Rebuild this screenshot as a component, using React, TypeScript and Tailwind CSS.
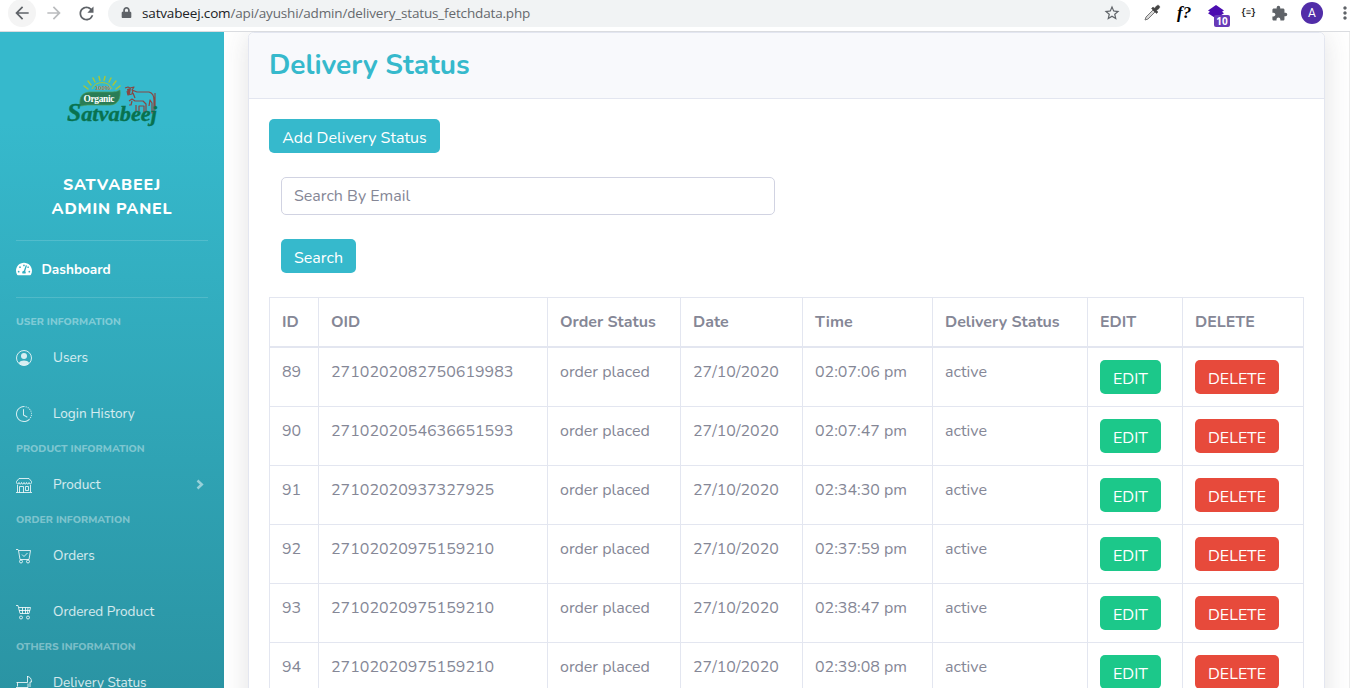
import type { ReactNode } from "react";
import { FaTachometerAlt, FaLock } from "react-icons/fa";
import { BsClockHistory } from "react-icons/bs";
import { MdArrowBack, MdArrowForward, MdRefresh, MdStarBorder, MdExtension, MdMoreVert } from "react-icons/md";

const rows = [
  ["89", "2710202082750619983", "02:07:06 pm"],
  ["90", "2710202054636651593", "02:07:47 pm"],
  ["91", "27102020937327925", "02:34:30 pm"],
  ["92", "27102020975159210", "02:37:59 pm"],
  ["93", "27102020975159210", "02:38:47 pm"],
  ["94", "27102020975159210", "02:39:08 pm"],
];

const columns = "grid grid-cols-[49px_229px_133px_122px_130px_155px_95px_122px]";
const cell = "border-l border-[#e3e6f0] pl-3 pt-3 leading-6 whitespace-nowrap last:border-r";

function BrowserBar() {
  return (
    <div className="flex h-8 shrink-0 items-start border-b border-[#dadce0] bg-white font-['Open_Sans',sans-serif]">
      <div className="flex h-[26px] w-[108px] items-center gap-1 pl-2 text-[#5f6368]">
        <div className="flex size-7 items-center justify-center rounded-full bg-[#f4f4f4]"><MdArrowBack size={20} /></div>
        <div className="flex size-7 items-center justify-center text-[#babcbe]"><MdArrowForward size={20} /></div>
        <div className="flex size-7 items-center justify-center"><MdRefresh size={21} /></div>
      </div>
      <div className="flex h-[27px] w-[1022px] items-center rounded-full bg-[#f1f3f4] pb-[2px] pl-3">
        <FaLock size={11} className="mr-[10px] ml-[1px] shrink-0 text-[#5f6368]" />
        <div className="text-[13.5px] leading-5 tracking-[-0.155px] text-[#66696d]">
          <span className="text-[#202124]">satvabeej.com</span>/api/ayushi/admin/delivery_status_fetchdata.php
        </div>
        <MdStarBorder size={18} className="mr-[9px] ml-auto text-[#5f6368]" />
      </div>
      <div className="flex h-[26px] flex-1 items-center">
        <svg className="ml-[13px] shrink-0" width="18" height="18" viewBox="0 0 18 18">
          <path d="M2 16l1-3 7-7 2 2-7 7z" fill="#d8d8d8" stroke="#777" strokeWidth="1" />
          <path d="M8.500 4.500l5 5 1.500-1.500-1.500-1.500L16 4.500c1-1 .8-2 .2-2.700s-1.800-.8-2.700.2L11.500 4.200 10 3z" fill="#454545" stroke="#454545" strokeWidth=".5" />
        </svg>
        <span className="ml-[16px] w-5 shrink-0 font-['Liberation_Serif',serif] text-[17px] leading-5 font-bold text-black italic">f?</span>
        <div className="relative ml-[10px] h-[22px] w-[22px] shrink-0 pt-[3px]">
          <svg width="18" height="16" viewBox="0 0 18 16">
            <path d="M9 0l8 5.500-2 1.300 2 1.400-8 5.300-8-5.300 2-1.400-2-1.300z" fill="#4b0db0" />
          </svg>
          <span className="absolute top-[13px] left-[7px] flex h-3 w-4 items-center justify-center rounded-[2px] bg-[#673ab7] text-[10px] leading-3 font-bold text-white">10</span>
        </div>
        <span className="ml-[12px] w-[18px] shrink-0 font-['Liberation_Mono',monospace] text-[9px] leading-3 font-bold tracking-[-0.7px] text-[#222]">{"{≡}"}</span>
        <MdExtension size={17} className="ml-[12px] shrink-0 text-[#5f6368]" />
        <span className="ml-[13px] flex size-[22px] shrink-0 items-center justify-center rounded-full bg-[#512da8] font-['Roboto',sans-serif] text-[12px] text-white">A</span>
        <MdMoreVert size={20} className="-mr-3 ml-[12px] shrink-0 text-[#5f6368]" />
      </div>
    </div>
  );
}

function Logo() {
  return (
    <svg width="92" height="54" viewBox="0 0 92 54">
      <g stroke="#a6c63b" strokeWidth="1.500" strokeLinecap="round">
        <path d="M24 10L21 6M28 7L26 3M33 5.500L32 1.500M37 5.500L38 1.500M42 7L44 3M46 10L49 6M21 14L17 11M49 14L53 11" />
      </g>
      <path d="M25 14a11 11 0 0 1 20 0" fill="none" stroke="#a6c63b" strokeWidth="1" />
      <text x="28" y="15" fontSize="6" fill="#b9814a" fontFamily="Liberation Sans" fontWeight="bold">100%</text>
      <path d="M13 31c-1-9 2-14 11-14h20c5 0 7-1 9-2 1 8-2 15-10 15H22c-5 0-6 1-9 1z" fill="#2a7d56" stroke="#4b9d59" strokeWidth=".7" />
      <text x="16.500" y="26.500" fontSize="9.500" textLength="31" fill="#fff" fontFamily="Liberation Serif" fontWeight="bold">Organic</text>
      <g fill="none" stroke="#874844" strokeWidth="1.200" strokeLinejoin="round">
        <path d="M58 13l3-1 2 1 4-1-2 3 5 2h12c4 1 5 4 5 8v13h-2v-10l-2-3-1 6M66 15l-1 4-4 1-1-4M66 18l2 5M88 18v14" />
        <path d="M62 26l3-2 3 2h8l3 3v8h-2v-6h-5v5M65 26l-1 4h-2M69 30v7" />
      </g>
      <path d="M60 14l4-1-1 6-2 1z" fill="#874844" />
      <text x="0" y="46" fontSize="22" textLength="90" lengthAdjust="spacingAndGlyphs" fill="#08724f" stroke="#08724f" strokeWidth=".4" fontFamily="Liberation Serif" fontWeight="bold" fontStyle="italic">
        <tspan fontSize="25">S</tspan>atvabeej
      </text>
    </svg>
  );
}

function UserIcon() {
  return (
    <svg width="16" height="16" viewBox="0 0 16 16" fill="currentColor">
      <circle cx="8" cy="8" r="7.500" fill="none" stroke="currentColor" />
      <circle cx="8" cy="6" r="3" />
      <path d="M2.800 13C4 11.200 5.800 10.500 8 10.500s4 .7 5.200 2.500C12 14.500 10 15.300 8 15.300S4 14.500 2.800 13z" />
    </svg>
  );
}

function ShopIcon() {
  return (
    <svg width="16" height="16" viewBox="0 0 16 16" fill="none" stroke="currentColor">
      <path d="M3 1.500h10l2.500 3v1c0 2-2.500 2-2.500 0 0 2-2.500 2-2.500 0 0 2-2.500 2-2.500 0 0 2-2.500 2-2.500 0 0 2-2.500 2-2.500 0 0 2-2.500 2-2.500 0v-1zM1.500 8v7M14.500 8v7M0 15.500h16M3.500 15.500v-6h4v6M9.500 9.500h3v4h-3z" />
    </svg>
  );
}

function CartIcon({ checked = false }: { checked?: boolean }) {
  return (
    <svg width="16" height="16" viewBox="0 0 16 16" fill="none" stroke="currentColor">
      {checked ? (
        <path d="M0 1.500h2l.5 1h12L13 11.500H4L2.500 2.500M6 6.500l2 2 3.500-3.500" />
      ) : (
        <path d="M0 1.500h2l.5 2h12L13 9.500H4L2.500 3.500M3 6.500h11M6.500 3.500v6M9.500 3.500v6M12 3.500l-.5 6" />
      )}
      <circle cx="5" cy="13.500" r="1.500" />
      <circle cx="12" cy="13.500" r="1.500" />
    </svg>
  );
}

function DeliveryIcon() {
  return (
    <svg width="16" height="16" viewBox="0 0 16 16" fill="none" stroke="currentColor">
      <path d="M11 1.500c3 0 4.500 2 4.500 5.500H14M11.500 1v6.500h-11M1.500 7.500v4M0 12.500h12v-4M14 7v5" />
    </svg>
  );
}

function Section({ className, children }: { className: string; children: ReactNode }) {
  return <div className={`h-4 pl-4 text-[10.4px] leading-4 font-extrabold whitespace-nowrap text-white/40 ${className}`}>{children}</div>;
}

function NavItem({ icon, label, arrow }: { icon: ReactNode; label: string; arrow?: boolean }) {
  return (
    <div className="flex h-14 shrink-0 items-center px-4 text-[13.6px] leading-5 text-white/80">
      <span className="w-[37px]">{icon}</span>
      <span className="whitespace-nowrap">{label}</span>
      {arrow && (
        <svg className="mr-[4px] ml-auto text-white/50" width="8" height="12" viewBox="0 0 8 12" fill="none" stroke="currentColor" strokeWidth="2.500">
          <path d="M1.500 1.500L5.800 5.500 1.500 9.500" />
        </svg>
      )}
    </div>
  );
}

function Sidebar() {
  return (
    <div className="h-[915px] w-56 shrink-0 bg-[linear-gradient(180deg,#36b9cc_10%,#258391_100%)]">
      <div className="flex h-[141px] justify-center pt-[43px] pl-[2px]"><Logo /></div>
      <div className="h-[67px] text-center text-[16px] leading-6 font-extrabold tracking-[0.8px] text-white">
        SATVABEEJ
        <br />
        ADMIN PANEL
      </div>
      <div className="mx-4 flex h-[58px] items-center border-y border-white/15 text-[13.6px] font-bold text-white">
        <FaTachometerAlt size={16} className="mr-[9.5px]" />
        <span className="pt-[2px]">Dashboard</span>
      </div>
      <Section className="mt-4">USER INFORMATION</Section>
      <NavItem icon={<UserIcon />} label="Users" />
      <NavItem icon={<BsClockHistory size={16} />} label="Login History" />
      <Section className="-mt-[1px]">PRODUCT INFORMATION</Section>
      <NavItem icon={<ShopIcon />} label="Product" arrow />
      <Section className="-mt-[1px]">ORDER INFORMATION</Section>
      <NavItem icon={<CartIcon checked />} label="Orders" />
      <NavItem icon={<CartIcon />} label="Ordered Product" />
      <Section className="-mt-[1px]">OTHERS INFORMATION</Section>
      <NavItem icon={<DeliveryIcon />} label="Delivery Status" />
    </div>
  );
}

function Card() {
  return (
    <div className="ml-6 h-[800px] w-[1077px] shrink-0 rounded-[5.6px] border border-[#e3e6f0] bg-white text-[16px] text-[#858796] shadow-[0_2.4px_28px_rgba(58,59,69,0.15)]">
      <div className="h-[66px] rounded-t-[5px] border-b border-[#e3e6f0] bg-[#f8f9fc] pt-[15px] pl-5">
        <h1 className="text-[28px] leading-[34px] font-bold text-[#36b9cc]">Delivery Status</h1>
      </div>
      <div className="pt-5 pl-5">
        <button className="block h-[34px] w-[171px] rounded-[5px] bg-[#36b9cc] pt-[3px] text-center whitespace-nowrap text-white">Add Delivery Status</button>
        <input placeholder="Search By Email" className="mt-6 ml-3 block h-[38px] w-[494px] rounded-[5px] border border-[#d1d3e2] bg-white px-3 placeholder:text-[#858796]" />
        <button className="mt-6 ml-3 block h-[34px] w-[75px] rounded-[5px] bg-[#36b9cc] pt-[3px] text-center text-white">Search</button>
        <div className="mt-6 w-[1035px]">
          <div className={`${columns} h-[51px] border-t border-b-2 border-[#e3e6f0] font-bold`}>
            <div className={cell}>ID</div>
            <div className={cell}>OID</div>
            <div className={cell}>Order Status</div>
            <div className={cell}>Date</div>
            <div className={cell}>Time</div>
            <div className={cell}>Delivery Status</div>
            <div className={cell}>EDIT</div>
            <div className={cell}>DELETE</div>
          </div>
          {rows.map(([id, oid, time]) => (
            <div key={id} className={`${columns} h-[59px] border-b border-[#e3e6f0]`}>
              <div className={cell}>{id}</div>
              <div className={cell}>{oid}</div>
              <div className={cell}>order placed</div>
              <div className={cell}>27/10/2020</div>
              <div className={cell}>{time}</div>
              <div className={cell}>active</div>
              <div className={cell}>
                <button className="block h-[34px] w-[61px] rounded-[5px] bg-[#1cc88a] pt-[3px] text-center text-white">EDIT</button>
              </div>
              <div className={cell}>
                <button className="block h-[34px] w-[84px] rounded-[5px] bg-[#e74a3b] pt-[3px] text-center text-white">DELETE</button>
              </div>
            </div>
          ))}
        </div>
      </div>
    </div>
  );
}

export default function App() {
  return (
    <div className="flex h-[688px] w-[1350px] flex-col overflow-hidden bg-white font-['Nunito','Lato',sans-serif]">
      <BrowserBar />
      <div className="flex h-[656px] overflow-hidden border-r border-[#ececec]">
        <Sidebar />
        <Card />
      </div>
    </div>
  );
}
